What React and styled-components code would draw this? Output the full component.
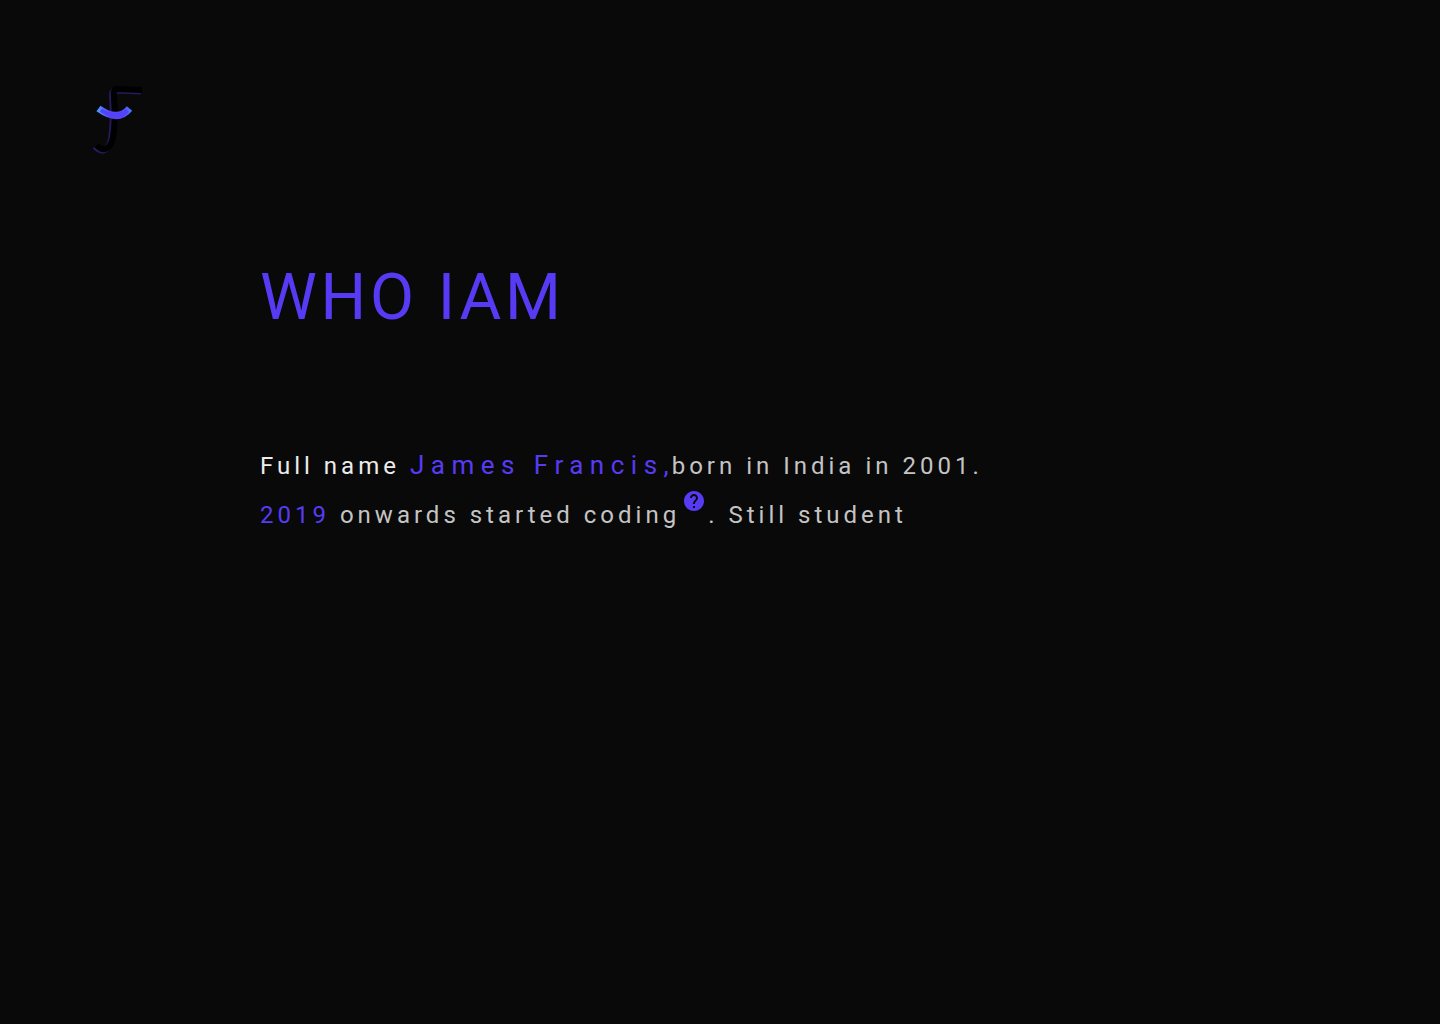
import React from "react";
import styled, { createGlobalStyle } from "styled-components";

const GlobalStyle = createGlobalStyle`
  body {
    margin: 0;
    background: #090909;
    font-family: Roboto, "Liberation Sans", sans-serif;
  }
`;

const Page = styled.div`
  box-sizing: border-box;
  min-height: 100vh;
  padding: 80px 92px;
  background: #090909;
`;

const Header = styled.header`
  display: flex;
`;

const HomeLink = styled.a`
  display: block;
  height: 80px;
`;

const Content = styled.main`
  padding: 100px 0 0 168px;
`;

const Title = styled.h1`
  margin: 0;
  font-size: 64px;
  line-height: 76px;
  font-weight: 400;
  letter-spacing: 0.06em;
  color: #573bf4;
`;

const Bio = styled.p`
  margin: 106px 0 0;
  font-size: 24px;
  line-height: 49px;
  letter-spacing: 4px;
  color: #c4c4c4;
`;

const Lead = styled.span`
  color: #ececec;
`;

const Name = styled.span`
  font-size: 26px;
  line-height: 24px;
  letter-spacing: ${({ $tight }) => ($tight ? "3px" : "0.25em")};
  color: #573bf4;
`;

const Year = styled.span`
  color: #573bf4;
`;

const HelpButton = styled.button`
  display: inline-block;
  width: 20px;
  height: 20px;
  margin: 0 4px;
  padding: 0;
  border: 0;
  background: none;
  color: #573bf4;
  line-height: 0;
  vertical-align: 12px;
  cursor: pointer;
`;

function Logo() {
  return (
    <svg width="56" height="80" viewBox="92 80 56 80" fill="none" aria-hidden="true">
      <defs>
        <linearGradient id="rim" x1="97" y1="0" x2="132" y2="0" gradientUnits="userSpaceOnUse">
          <stop offset="0" stopColor="#4b9bff" />
          <stop offset="0.4" stopColor="#5348f6" />
          <stop offset="0.7" stopColor="#5348f6" />
          <stop offset="1" stopColor="#4b7dff" />
        </linearGradient>
      </defs>
      <path
        d="M141 91.5L116 90.5Q112 90.5 112 95C113 110 113 126 111.2 138C109.6 148 103.6 155.5 94.8 146.5"
        stroke="#261a5e"
        strokeWidth="6"
      />
      <path
        d="M142 90L117 89Q113.8 89 113.8 94C115 110 115 126 113 137C111 147 105 154 96.5 145"
        stroke="#000"
        strokeWidth="6"
      />
      <path d="M98.5 108.5Q118 122.5 129.5 108.5" stroke="url(#rim)" strokeWidth="7" />
      <path d="M101 110.2Q117.5 121 127.5 110.5" stroke="#5640fa" strokeWidth="4" />
    </svg>
  );
}

function HelpIcon() {
  return (
    <svg width="20" height="20" viewBox="2 2 20 20" fill="currentColor" aria-hidden="true">
      <path d="M12 2C6.48 2 2 6.48 2 12s4.48 10 10 10 10-4.48 10-10S17.52 2 12 2zm1 17h-2v-2h2v2zm2.07-7.75l-.9.92C13.45 12.9 13 13.5 13 15h-2v-.5c0-1.1.45-2.1 1.17-2.83l1.24-1.26c.37-.36.59-.86.59-1.41 0-1.1-.9-2-2-2s-2 .9-2 2H8c0-2.21 1.79-4 4-4s4 1.79 4 4c0 .88-.36 1.68-.93 2.25z" />
    </svg>
  );
}

export default function App() {
  return (
    <>
      <GlobalStyle />
      <Page>
        <Header>
          <HomeLink href="#" aria-label="Home">
            <Logo />
          </HomeLink>
        </Header>
        <Content>
          <Title>WHO IAM</Title>
          <Bio>
            <Lead>Full name </Lead>
            <Name>James Francis</Name>
            <Name $tight>,</Name>born in India in 2001.
            <br />
            <Year>2019</Year> onwards started coding
            <HelpButton type="button" aria-label="More about coding">
              <HelpIcon />
            </HelpButton>
            . Still student
          </Bio>
        </Content>
      </Page>
    </>
  );
}
